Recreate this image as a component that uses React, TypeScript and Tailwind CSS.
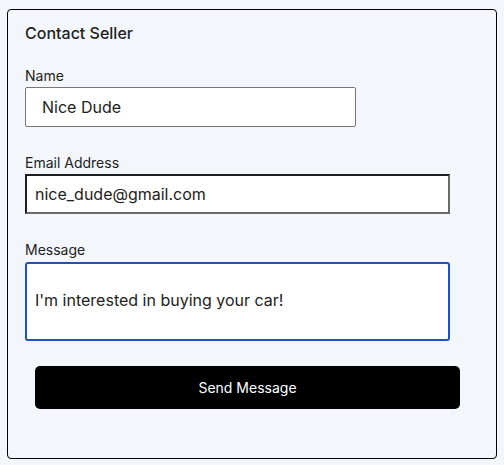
import { useState } from "react";

export default function App() {
  const [name, setName] = useState("Nice Dude");
  const [email, setEmail] = useState("nice_dude@gmail.com");
  const [message, setMessage] = useState("I'm interested in buying your car!");

  return (
    <div
      className="min-h-[465px] bg-[#f3f6fb] px-[7px] pt-[9px] pb-[6px] text-[#222]"
      style={{ fontFamily: "Inter, 'Noto Sans', sans-serif" }}
    >
      <div className="flex flex-col rounded-[4px] border border-black bg-[#f3f6fb] pl-[17px] pr-[47px] pt-[11px] pb-[49px]">
        <h2 className="text-base font-medium leading-6">Contact Seller</h2>

        <label className="mt-[21px] text-sm leading-5">Name</label>
        <input
          className="mt-px h-10 w-[331px] rounded-[2px] border border-[#777] bg-white pl-4 text-base text-[#222] outline-none"
          value={name}
          onChange={(e) => setName(e.target.value)}
        />

        <label className="mt-[26px] text-sm leading-5">Email Address</label>
        <input
          className="mt-px h-10 w-[425px] border-2 border-t-[#1e1e1e] border-l-[#1e1e1e] border-r-[#6a6a6a] border-b-[#6a6a6a] bg-white pl-2 text-base text-[#222] outline-none"
          value={email}
          onChange={(e) => setEmail(e.target.value)}
        />

        <label className="mt-[26px] text-sm leading-5">Message</label>
        <textarea
          className="mt-[2px] h-[79px] w-[425px] resize-none rounded-[3px] border-2 border-[#1f51c2] bg-white pl-2 pt-6 text-base leading-6 text-[#222] outline-none"
          value={message}
          onChange={(e) => setMessage(e.target.value)}
        />

        <button className="ml-[10px] mt-[25px] h-[43px] w-[425px] rounded-[5px] bg-black text-sm text-white">
          Send Message
        </button>
      </div>
    </div>
  );
}
